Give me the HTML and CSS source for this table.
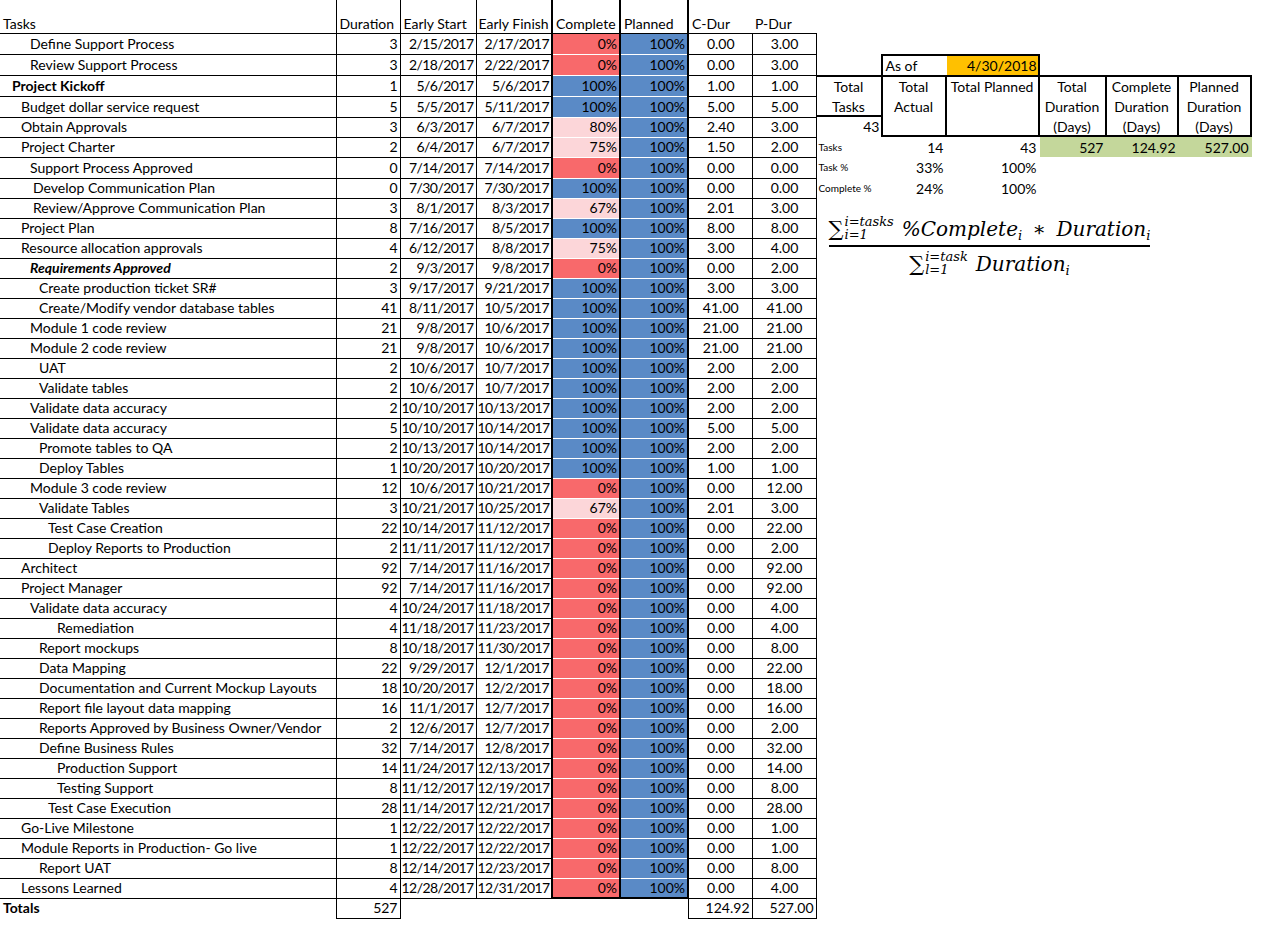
FILE: index.html
```html
<!DOCTYPE html>
<html lang="en">
<head>
<meta charset="utf-8">
<title>Project Tasks</title>
<link rel="stylesheet" href="styles.css">
</head>
<body>
<div class="page">
<table class="sheet">
<colgroup>
<col class="w-task"><col class="w-dur"><col class="w-date"><col class="w-date"><col class="w-pct"><col class="w-pct"><col class="w-cd"><col class="w-pd">
</colgroup>
<tr class="hdr">
<td class="t hp">Tasks</td><td class="n">Duration</td><td class="d1">Early Start</td><td class="d2">Early Finish</td><td class="cp">Complete</td><td class="pl">Planned</td><td class="cdh">C-Dur</td><td class="pdh">P-Dur</td>
</tr>
<tr class="r21"><td class="t i30">Define Support Process</td><td class="n">3</td><td class="d1">2/15/2017</td><td class="d2">2/17/2017</td><td class="cp red">0%</td><td class="pl blue">100%</td><td class="cd">0.00</td><td class="pd">3.00</td></tr>
<tr class="r21"><td class="t i30">Review Support Process</td><td class="n">3</td><td class="d1">2/18/2017</td><td class="d2">2/22/2017</td><td class="cp red">0%</td><td class="pl blue">100%</td><td class="cd">0.00</td><td class="pd">3.00</td></tr>
<tr class="r21"><td class="t i12 b">Project Kickoff</td><td class="n">1</td><td class="d1">5/6/2017</td><td class="d2">5/6/2017</td><td class="cp blue">100%</td><td class="pl blue">100%</td><td class="cd">1.00</td><td class="pd">1.00</td></tr>
<tr class="r21"><td class="t i21">Budget dollar service request</td><td class="n">5</td><td class="d1">5/5/2017</td><td class="d2">5/11/2017</td><td class="cp blue">100%</td><td class="pl blue">100%</td><td class="cd">5.00</td><td class="pd">5.00</td></tr>
<tr><td class="t i21">Obtain Approvals</td><td class="n">3</td><td class="d1">6/3/2017</td><td class="d2">6/7/2017</td><td class="cp pink">80%</td><td class="pl blue">100%</td><td class="cd">2.40</td><td class="pd">3.00</td></tr>
<tr><td class="t i21">Project Charter</td><td class="n">2</td><td class="d1">6/4/2017</td><td class="d2">6/7/2017</td><td class="cp pink">75%</td><td class="pl blue">100%</td><td class="cd">1.50</td><td class="pd">2.00</td></tr>
<tr class="r21"><td class="t i30">Support Process Approved</td><td class="n">0</td><td class="d1">7/14/2017</td><td class="d2">7/14/2017</td><td class="cp red">0%</td><td class="pl blue">100%</td><td class="cd">0.00</td><td class="pd">0.00</td></tr>
<tr><td class="t i33">Develop Communication Plan</td><td class="n">0</td><td class="d1">7/30/2017</td><td class="d2">7/30/2017</td><td class="cp blue">100%</td><td class="pl blue">100%</td><td class="cd">0.00</td><td class="pd">0.00</td></tr>
<tr><td class="t i33">Review/Approve Communication Plan</td><td class="n">3</td><td class="d1">8/1/2017</td><td class="d2">8/3/2017</td><td class="cp pink">67%</td><td class="pl blue">100%</td><td class="cd">2.01</td><td class="pd">3.00</td></tr>
<tr><td class="t i21">Project Plan</td><td class="n">8</td><td class="d1">7/16/2017</td><td class="d2">8/5/2017</td><td class="cp blue">100%</td><td class="pl blue">100%</td><td class="cd">8.00</td><td class="pd">8.00</td></tr>
<tr><td class="t i21">Resource allocation approvals</td><td class="n">4</td><td class="d1">6/12/2017</td><td class="d2">8/8/2017</td><td class="cp pink">75%</td><td class="pl blue">100%</td><td class="cd">3.00</td><td class="pd">4.00</td></tr>
<tr><td class="t i30 bi">Requirements Approved</td><td class="n">2</td><td class="d1">9/3/2017</td><td class="d2">9/8/2017</td><td class="cp red">0%</td><td class="pl blue">100%</td><td class="cd">0.00</td><td class="pd">2.00</td></tr>
<tr><td class="t i39">Create production ticket SR#</td><td class="n">3</td><td class="d1">9/17/2017</td><td class="d2">9/21/2017</td><td class="cp blue">100%</td><td class="pl blue">100%</td><td class="cd">3.00</td><td class="pd">3.00</td></tr>
<tr><td class="t i39">Create/Modify vendor database tables</td><td class="n">41</td><td class="d1">8/11/2017</td><td class="d2">10/5/2017</td><td class="cp blue">100%</td><td class="pl blue">100%</td><td class="cd">41.00</td><td class="pd">41.00</td></tr>
<tr><td class="t i30">Module 1 code review</td><td class="n">21</td><td class="d1">9/8/2017</td><td class="d2">10/6/2017</td><td class="cp blue">100%</td><td class="pl blue">100%</td><td class="cd">21.00</td><td class="pd">21.00</td></tr>
<tr><td class="t i30">Module 2 code review</td><td class="n">21</td><td class="d1">9/8/2017</td><td class="d2">10/6/2017</td><td class="cp blue">100%</td><td class="pl blue">100%</td><td class="cd">21.00</td><td class="pd">21.00</td></tr>
<tr><td class="t i39">UAT</td><td class="n">2</td><td class="d1">10/6/2017</td><td class="d2">10/7/2017</td><td class="cp blue">100%</td><td class="pl blue">100%</td><td class="cd">2.00</td><td class="pd">2.00</td></tr>
<tr><td class="t i39">Validate tables</td><td class="n">2</td><td class="d1">10/6/2017</td><td class="d2">10/7/2017</td><td class="cp blue">100%</td><td class="pl blue">100%</td><td class="cd">2.00</td><td class="pd">2.00</td></tr>
<tr><td class="t i30">Validate data accuracy</td><td class="n">2</td><td class="d1">10/10/2017</td><td class="d2">10/13/2017</td><td class="cp blue">100%</td><td class="pl blue">100%</td><td class="cd">2.00</td><td class="pd">2.00</td></tr>
<tr><td class="t i30">Validate data accuracy</td><td class="n">5</td><td class="d1">10/10/2017</td><td class="d2">10/14/2017</td><td class="cp blue">100%</td><td class="pl blue">100%</td><td class="cd">5.00</td><td class="pd">5.00</td></tr>
<tr><td class="t i39">Promote tables to QA</td><td class="n">2</td><td class="d1">10/13/2017</td><td class="d2">10/14/2017</td><td class="cp blue">100%</td><td class="pl blue">100%</td><td class="cd">2.00</td><td class="pd">2.00</td></tr>
<tr><td class="t i39">Deploy Tables</td><td class="n">1</td><td class="d1">10/20/2017</td><td class="d2">10/20/2017</td><td class="cp blue">100%</td><td class="pl blue">100%</td><td class="cd">1.00</td><td class="pd">1.00</td></tr>
<tr><td class="t i30">Module 3 code review</td><td class="n">12</td><td class="d1">10/6/2017</td><td class="d2">10/21/2017</td><td class="cp red">0%</td><td class="pl blue">100%</td><td class="cd">0.00</td><td class="pd">12.00</td></tr>
<tr><td class="t i39">Validate Tables</td><td class="n">3</td><td class="d1">10/21/2017</td><td class="d2">10/25/2017</td><td class="cp pink">67%</td><td class="pl blue">100%</td><td class="cd">2.01</td><td class="pd">3.00</td></tr>
<tr><td class="t i48">Test Case Creation</td><td class="n">22</td><td class="d1">10/14/2017</td><td class="d2">11/12/2017</td><td class="cp red">0%</td><td class="pl blue">100%</td><td class="cd">0.00</td><td class="pd">22.00</td></tr>
<tr><td class="t i48">Deploy Reports to Production</td><td class="n">2</td><td class="d1">11/11/2017</td><td class="d2">11/12/2017</td><td class="cp red">0%</td><td class="pl blue">100%</td><td class="cd">0.00</td><td class="pd">2.00</td></tr>
<tr><td class="t i21">Architect</td><td class="n">92</td><td class="d1">7/14/2017</td><td class="d2">11/16/2017</td><td class="cp red">0%</td><td class="pl blue">100%</td><td class="cd">0.00</td><td class="pd">92.00</td></tr>
<tr><td class="t i21">Project Manager</td><td class="n">92</td><td class="d1">7/14/2017</td><td class="d2">11/16/2017</td><td class="cp red">0%</td><td class="pl blue">100%</td><td class="cd">0.00</td><td class="pd">92.00</td></tr>
<tr><td class="t i30">Validate data accuracy</td><td class="n">4</td><td class="d1">10/24/2017</td><td class="d2">11/18/2017</td><td class="cp red">0%</td><td class="pl blue">100%</td><td class="cd">0.00</td><td class="pd">4.00</td></tr>
<tr><td class="t i57">Remediation</td><td class="n">4</td><td class="d1">11/18/2017</td><td class="d2">11/23/2017</td><td class="cp red">0%</td><td class="pl blue">100%</td><td class="cd">0.00</td><td class="pd">4.00</td></tr>
<tr><td class="t i39">Report mockups</td><td class="n">8</td><td class="d1">10/18/2017</td><td class="d2">11/30/2017</td><td class="cp red">0%</td><td class="pl blue">100%</td><td class="cd">0.00</td><td class="pd">8.00</td></tr>
<tr><td class="t i39">Data Mapping</td><td class="n">22</td><td class="d1">9/29/2017</td><td class="d2">12/1/2017</td><td class="cp red">0%</td><td class="pl blue">100%</td><td class="cd">0.00</td><td class="pd">22.00</td></tr>
<tr><td class="t i39">Documentation and Current Mockup Layouts</td><td class="n">18</td><td class="d1">10/20/2017</td><td class="d2">12/2/2017</td><td class="cp red">0%</td><td class="pl blue">100%</td><td class="cd">0.00</td><td class="pd">18.00</td></tr>
<tr><td class="t i39">Report file layout data mapping</td><td class="n">16</td><td class="d1">11/1/2017</td><td class="d2">12/7/2017</td><td class="cp red">0%</td><td class="pl blue">100%</td><td class="cd">0.00</td><td class="pd">16.00</td></tr>
<tr><td class="t i39">Reports Approved by Business Owner/Vendor</td><td class="n">2</td><td class="d1">12/6/2017</td><td class="d2">12/7/2017</td><td class="cp red">0%</td><td class="pl blue">100%</td><td class="cd">0.00</td><td class="pd">2.00</td></tr>
<tr><td class="t i39">Define Business Rules</td><td class="n">32</td><td class="d1">7/14/2017</td><td class="d2">12/8/2017</td><td class="cp red">0%</td><td class="pl blue">100%</td><td class="cd">0.00</td><td class="pd">32.00</td></tr>
<tr><td class="t i57">Production Support</td><td class="n">14</td><td class="d1">11/24/2017</td><td class="d2">12/13/2017</td><td class="cp red">0%</td><td class="pl blue">100%</td><td class="cd">0.00</td><td class="pd">14.00</td></tr>
<tr><td class="t i57">Testing Support</td><td class="n">8</td><td class="d1">11/12/2017</td><td class="d2">12/19/2017</td><td class="cp red">0%</td><td class="pl blue">100%</td><td class="cd">0.00</td><td class="pd">8.00</td></tr>
<tr><td class="t i48">Test Case Execution</td><td class="n">28</td><td class="d1">11/14/2017</td><td class="d2">12/21/2017</td><td class="cp red">0%</td><td class="pl blue">100%</td><td class="cd">0.00</td><td class="pd">28.00</td></tr>
<tr><td class="t i21">Go-Live Milestone</td><td class="n">1</td><td class="d1">12/22/2017</td><td class="d2">12/22/2017</td><td class="cp red">0%</td><td class="pl blue">100%</td><td class="cd">0.00</td><td class="pd">1.00</td></tr>
<tr><td class="t i21">Module Reports in Production- Go live</td><td class="n">1</td><td class="d1">12/22/2017</td><td class="d2">12/22/2017</td><td class="cp red">0%</td><td class="pl blue">100%</td><td class="cd">0.00</td><td class="pd">1.00</td></tr>
<tr><td class="t i39">Report UAT</td><td class="n">8</td><td class="d1">12/14/2017</td><td class="d2">12/23/2017</td><td class="cp red">0%</td><td class="pl blue">100%</td><td class="cd">0.00</td><td class="pd">8.00</td></tr>
<tr class="last"><td class="t i21">Lessons Learned</td><td class="n">4</td><td class="d1">12/28/2017</td><td class="d2">12/31/2017</td><td class="cp red">0%</td><td class="pl blue">100%</td><td class="cd">0.00</td><td class="pd">4.00</td></tr>
<tr class="tot"><td class="tt-l b hp">Totals</td><td class="tbox">527</td><td class="blank" colspan="4"></td><td class="tbox tbl">124.92</td><td class="tbox">527.00</td></tr>
</table>

<div class="side">
<div class="summary">
<div class="asof-l">As of</div>
<div class="asof-d">4/30/2018</div>
<div class="tt-h">Total<br>Tasks</div>
<div class="tt-v">43</div>
<div class="sh sh-first">Total<br>Actual</div>
<div class="sh">Total Planned</div>
<div class="sh">Total<br>Duration<br>(Days)</div>
<div class="sh">Complete<br>Duration<br>(Days)</div>
<div class="sh">Planned<br>Duration<br>(Days)</div>
<div class="lab re">Tasks</div><div class="val re">14</div><div class="val re">43</div><div class="val re green">527</div><div class="val re green">124.92</div><div class="val re green">527.00</div>
<div class="lab rf">Task %</div><div class="val rf">33%</div><div class="val rf">100%</div>
<div class="lab rg">Complete %</div><div class="val rg">24%</div><div class="val rg">100%</div>
</div>

<div class="formula">
<div class="fnum">
<span class="sig">∑</span><span class="lims"><span>i=tasks</span><span>i=1</span></span><span class="expr">%Complete<sub>i</sub> <span class="op">∗</span> Duration<sub>i</sub></span>
</div>
<div class="fbar"></div>
<div class="fden">
<span class="sig">∑</span><span class="lims"><span>i=task</span><span>l=1</span></span><span class="expr">Duration<sub>i</sub></span>
</div>
</div>
</div>
</div>
</body>
</html>
```

FILE: styles.css
```css
* { box-sizing: border-box; }

body {
  margin: 0;
  background: #fff;
  color: #000;
  font-family: Lato, "Liberation Sans", sans-serif;
  font-size: 14px;
}

.page {
  display: flex;
  align-items: flex-start;
}

/* ---------- main sheet ---------- */
.sheet {
  border-collapse: collapse;
  table-layout: fixed;
  width: 816px;
  flex: none;
}

.w-task { width: 336px; }
.w-dur  { width: 64px; }
.w-date { width: 76px; }
.w-pct  { width: 68px; }
.w-cd   { width: 64px; }
.w-pd   { width: 64px; }

.sheet tr { height: 20px; }
.sheet tr.r21 { height: 21px; }
.sheet tr.hdr { height: 33px; }

.sheet td {
  padding: 0 2px 0 3px;
  border: 0;
  border-bottom: 1px solid #000;
  white-space: nowrap;
  overflow: hidden;
  line-height: 18px;
  vertical-align: middle;
}

.hdr td { vertical-align: bottom; text-align: left; }

.t  { border-right: 1px solid #000 !important; text-align: left; }
.n  { border-right: 1px solid #000 !important; text-align: right; }
.d1 { border-right: 1px solid #000 !important; text-align: right; }
.d2 { text-align: right; }
.cp { border-left: 2px solid #000 !important; border-right: 2px solid #000 !important; text-align: right; }
.pl { border-right: 2px solid #000 !important; text-align: right; }
.cd { border-right: 1px solid #000 !important; text-align: center; }
.pd { border-right: 1px solid #000 !important; text-align: center; }

.sheet tr:not(.hdr) td.d1,
.sheet tr:not(.hdr) td.d2 {
  letter-spacing: -0.55px;
  padding-left: 1px;
  padding-right: 2px;
}

.hdr .d1, .hdr .d2, .hdr .cp, .hdr .pl, .hdr .n { text-align: left; }
.sheet .hdr td.d2 { padding-left: 2px; }

.sheet td.hp { padding-left: 3px; }
.sheet td.i12 { padding-left: 12px; }
.sheet td.i21 { padding-left: 21px; }
.sheet td.i30 { padding-left: 30px; }
.sheet td.i33 { padding-left: 33px; }
.sheet td.i39 { padding-left: 39px; }
.sheet td.i48 { padding-left: 48px; }
.sheet td.i57 { padding-left: 57px; }

.b  { font-weight: 700; }
.bi { font-weight: 700; font-style: italic; }

.red  { background: #f8696b; }
.pink { background: #fcd6d9; }
.blue { background: #5a8ac6; }

.sheet td.red, .sheet td.pink, .sheet td.blue {
  border-bottom-color: rgba(255, 255, 255, 0.45);
}

.sheet tr.last td.cp, .sheet tr.last td.pl {
  border-bottom: 2px solid #000;
}

.tot td { border-bottom: 0; }
.sheet .tot td.tt-l { border-right: 1px solid #000; }
.sheet .tot td.tbox {
  border-right: 1px solid #000;
  border-bottom: 1px solid #000;
  text-align: right;
}
.sheet .tot td.tbl { border-left: 1px solid #000; }
.sheet .tot td.blank { border: 0; }

/* ---------- side panel ---------- */
.side {
  margin-top: 54px;
  display: flex;
  flex-direction: column;
  align-items: flex-start;
}

.summary {
  display: grid;
  grid-template-columns: 64px 66px 93px 67px 72px 73px;
  grid-template-rows: 21px 21px 21px 20px 20px 21px 20px;
  line-height: 19px;
}

.summary > div { white-space: nowrap; }

.asof-l {
  grid-column: 2;
  grid-row: 1;
  border-top: 2px solid #000;
  border-left: 2px solid #000;
  padding-left: 3px;
}

.asof-d {
  grid-column: 3;
  grid-row: 1;
  background: #ffc000;
  border-top: 2px solid #000;
  border-right: 2px solid #000;
  text-align: right;
  padding-right: 1px;
}

.tt-h {
  grid-column: 1;
  grid-row: 2 / 4;
  border-top: 2px solid #000;
  border-bottom: 2px solid #000;
  text-align: center;
  line-height: 20px;
}

.tt-v {
  grid-column: 1;
  grid-row: 4;
  text-align: right;
  padding-right: 1px;
  line-height: 20px;
}

.sh {
  grid-row: 2 / 5;
  border-top: 2px solid #000;
  border-bottom: 2px solid #000;
  border-right: 2px solid #000;
  text-align: center;
  line-height: 20px;
}

.sh-first { border-left: 2px solid #000; }

.re { grid-row: 5; }
.rf { grid-row: 6; }
.rg { grid-row: 7; }

.lab {
  grid-column: 1;
  font-size: 10px;
  padding-left: 2px;
  display: flex;
  align-items: center;
}

.val {
  padding-right: 3px;
  display: flex;
  align-items: center;
  justify-content: flex-end;
}

.green { background: #c4d79b; }

/* ---------- formula ---------- */
.formula {
  margin: 19px 0 0 12px;
  display: flex;
  flex-direction: column;
  align-items: center;
  font-family: "DejaVu Serif", "Liberation Serif", serif;
  font-style: italic;
  font-size: 20px;
  line-height: 24px;
}

.fnum, .fden {
  display: flex;
  align-items: center;
  white-space: nowrap;
}

.sig {
  font-style: normal;
  font-size: 21px;
}

.lims {
  display: flex;
  flex-direction: column;
  font-size: 13px;
  line-height: 13px;
  margin: -2px 8px 0 1px;
}

.expr sub {
  font-size: 13px;
  vertical-align: -4px;
  line-height: 0;
}

.op { font-style: normal; padding: 0 4px; }

.fbar {
  align-self: stretch;
  border-top: 2px solid #000;
  margin: 4px 0 5px;
}
```
